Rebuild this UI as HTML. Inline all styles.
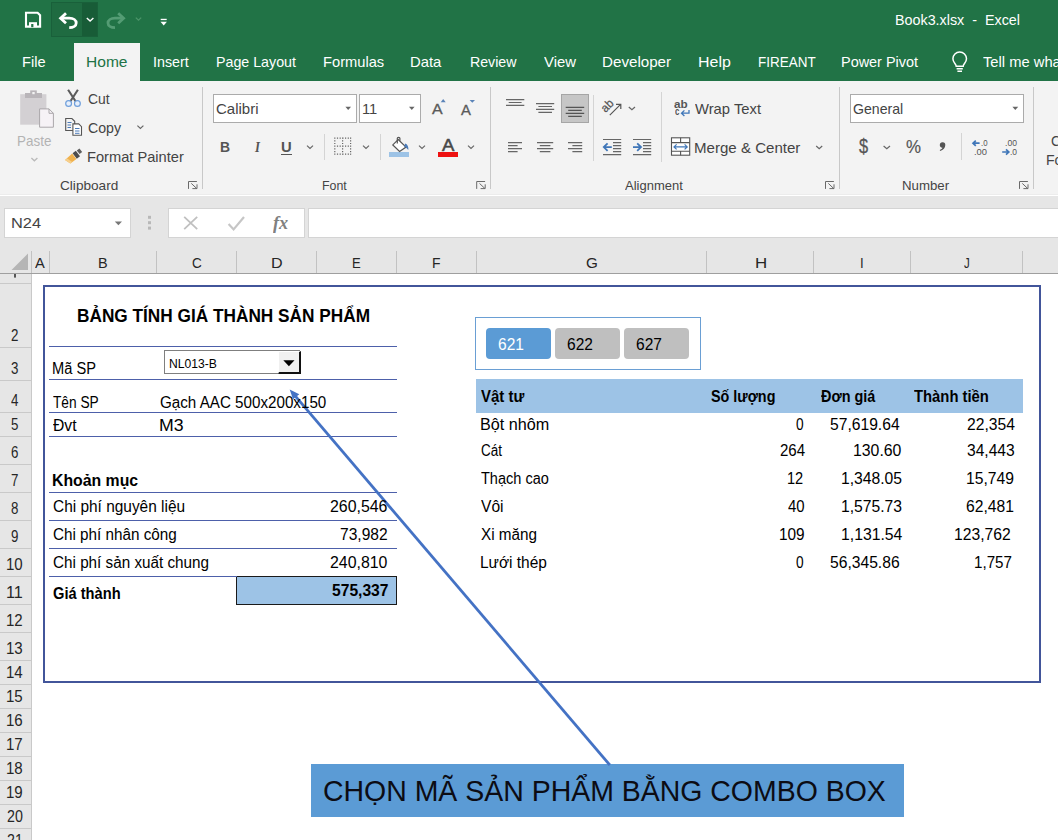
<!DOCTYPE html>
<html lang="en">
<head>
<meta charset="utf-8">
<title>Book3.xlsx - Excel</title>
<style>
*{box-sizing:border-box;margin:0;padding:0}
html,body{width:1058px;height:840px;overflow:hidden;background:#fff}
body{position:relative;font-family:"Liberation Sans",sans-serif;color:#444}
.a{position:absolute}
.t{position:absolute;white-space:pre;transform-origin:0 0;line-height:1}
#titlebar{left:0;top:0;width:1058px;height:81px;background:#217346}
#hometab{left:74px;top:43px;width:66px;height:38px;background:#f3f3f3}
#undobox{left:51px;top:2px;width:47px;height:35px;background:#1f6b41;border:1px solid #19603a}
#undodrop{left:82px;top:3px;width:15px;height:33px;background:#185c37}
#ribbon{left:0;top:81px;width:1058px;height:114px;background:#f3f3f3}
#ribbonline{left:0;top:194px;width:1058px;height:1px;background:#ececec}
#fbar{left:0;top:196px;width:1058px;height:54px;background:#e6e6e6}
.vsep{width:1px;background:#c8c8c8}
.box{background:#fff;border:1px solid #ababab}
.fbox{background:#fff;border:1px solid #d4d4d4}
#colhdr{left:0;top:250px;width:1058px;height:24px;background:#e6e6e6;border-bottom:1px solid #9f9f9f}
#rowhdr{left:0;top:274px;width:32px;height:566px;background:#e6e6e6;border-right:1px solid #c9c9c9}
.cs{top:251px;width:1px;height:22px;background:#c2c2c2}
.rs{left:0;width:31px;height:1px;background:#c9c9c9}
.hl{left:49px;width:348px;height:1px;background:#4d60aa}
</style>
</head>
<body>
<!-- title bar + tab strip -->
<div class="a" id="titlebar"></div>
<div class="a" id="undobox"></div>
<div class="a" id="undodrop"></div>
<div class="a" id="hometab"></div>
<!-- ribbon -->
<div class="a" id="ribbon"></div>
<div class="a" id="ribbonline"></div>
<div class="a" id="fbar"></div>
<!-- ribbon boxes & separators -->
<div class="a vsep" style="left:202px;top:87px;height:102px"></div>
<div class="a vsep" style="left:490px;top:87px;height:102px"></div>
<div class="a vsep" style="left:839px;top:87px;height:102px"></div>
<div class="a vsep" style="left:1033px;top:87px;height:102px"></div>
<div class="a vsep" style="left:324px;top:134px;height:26px;background:#d4d4d4"></div>
<div class="a vsep" style="left:380px;top:134px;height:26px;background:#d4d4d4"></div>
<div class="a vsep" style="left:593px;top:95px;height:66px;background:#d4d4d4"></div>
<div class="a vsep" style="left:661px;top:92px;height:70px;background:#d4d4d4"></div>
<div class="a vsep" style="left:961px;top:133px;height:27px;background:#d4d4d4"></div>
<div class="a box" style="left:213px;top:94px;width:144px;height:29px"></div>
<div class="a box" style="left:359px;top:94px;width:62px;height:29px"></div>
<div class="a box" style="left:850px;top:94px;width:174px;height:29px"></div>
<div class="a" style="left:561px;top:94px;width:28px;height:29px;background:#c6c6c6;border:1px solid #a6a6a6"></div>
<div class="a" style="left:389px;top:152px;width:20px;height:5px;background:#9dc3e6"></div>
<div class="a" style="left:438px;top:152px;width:20px;height:5px;background:#ee1111"></div>
<div class="a" style="left:281px;top:154px;width:11px;height:1px;background:#555"></div>

<!-- formula bar -->
<div class="a fbox" style="left:4px;top:208px;width:127px;height:30px"></div>
<div class="a fbox" style="left:168px;top:208px;width:137px;height:30px"></div>
<div class="a fbox" style="left:308px;top:208px;width:760px;height:30px"></div>
<!-- headers -->
<div class="a" id="colhdr"></div>
<div class="a" id="rowhdr"></div>
<div class="a cs" style="left:31px"></div>
<div class="a cs" style="left:49px"></div>
<div class="a cs" style="left:156px"></div>
<div class="a cs" style="left:236px"></div>
<div class="a cs" style="left:316px"></div>
<div class="a cs" style="left:396px"></div>
<div class="a cs" style="left:476px"></div>
<div class="a cs" style="left:706px"></div>
<div class="a cs" style="left:813px"></div>
<div class="a cs" style="left:910px"></div>
<div class="a cs" style="left:1022px"></div>
<div class="a rs" style="top:283px"></div>
<div class="a rs" style="top:347px"></div>
<div class="a rs" style="top:380px"></div>
<div class="a rs" style="top:412px"></div>
<div class="a rs" style="top:436px"></div>
<div class="a rs" style="top:464px"></div>
<div class="a rs" style="top:492px"></div>
<div class="a rs" style="top:520px"></div>
<div class="a rs" style="top:548px"></div>
<div class="a rs" style="top:576px"></div>
<div class="a rs" style="top:604px"></div>
<div class="a rs" style="top:632px"></div>
<div class="a rs" style="top:660px"></div>
<div class="a rs" style="top:684px"></div>
<div class="a rs" style="top:708px"></div>
<div class="a rs" style="top:732px"></div>
<div class="a rs" style="top:756px"></div>
<div class="a rs" style="top:780px"></div>
<div class="a rs" style="top:804px"></div>
<div class="a rs" style="top:828px"></div>
<!-- sheet content -->
<div class="a" style="left:43px;top:285px;width:998px;height:398px;border:2px solid #42559a"></div>
<div class="a hl" style="top:346px"></div>
<div class="a hl" style="top:379px"></div>
<div class="a hl" style="top:412px"></div>
<div class="a hl" style="top:436px"></div>
<div class="a hl" style="top:492px"></div>
<div class="a hl" style="top:520px"></div>
<div class="a hl" style="top:548px"></div>
<div class="a" style="left:236px;top:576px;width:161px;height:29px;background:#9dc3e6;border:1px solid #1a1a1a"></div>
<div class="a hl" style="top:576px;width:188px"></div>
<!-- combo box -->
<div class="a" style="left:164px;top:350px;width:136px;height:24px;background:#fff;border:1px solid #7f7f7f"></div>
<div class="a" style="left:278px;top:351px;width:23px;height:23px;background:#f0f0f0;border-left:1px solid #fff;border-top:1px solid #fff;border-right:2px solid #111;border-bottom:2px solid #111"></div>
<svg class="a" style="left:283px;top:360.4px" width="12" height="7" viewBox="0 0 12 7"><path d="M0.3 0.3h11.2l-5.6 6z" fill="#000"/></svg>
<!-- slicer -->
<div class="a" style="left:475px;top:317px;width:226px;height:53px;background:#fff;border:1px solid #6a9fd4"></div>
<div class="a" style="left:486px;top:328px;width:65px;height:31px;background:#5b9bd5;border-radius:4px"></div>
<div class="a" style="left:555px;top:328px;width:65px;height:31px;background:#bfbfbf;border-radius:4px"></div>
<div class="a" style="left:624px;top:328px;width:65px;height:31px;background:#bfbfbf;border-radius:4px"></div>
<!-- table header band -->
<div class="a" style="left:476px;top:379px;width:547px;height:34px;background:#9dc3e6"></div>
<!-- callout -->
<div class="a" style="left:311px;top:764px;width:593px;height:53px;background:#5b9bd5"></div>
<svg class="a" style="left:0;top:0" width="1058" height="840" viewBox="0 0 1058 840">
<line x1="609.8" y1="765" x2="294.5" y2="395.2" stroke="#4472c4" stroke-width="2.8"/>
<path d="M289.7 389.6 L299.3 394.3 L293.0 399.2 Z" fill="#4472c4"/>
</svg>

<svg class="a" style="left:0;top:0" width="1058" height="840" viewBox="0 0 1058 840" fill="none" stroke-linecap="butt">
<!-- QAT: save -->
<g stroke="#fff" stroke-width="2.1" fill="none">
<path d="M26 12.8h11.6l2.5 2.5v11.3h-14.1z"/>
</g>
<rect x="29" y="22.2" width="8" height="5" fill="#fff"/>
<rect x="31.2" y="24" width="2.2" height="3.2" fill="#217346"/>
<!-- undo -->
<g stroke="#fff" stroke-width="2.8" fill="none" stroke-linejoin="miter">
<path d="M66 13.2l-5.4 5 5.4 5"/>
<path d="M61 18.2h8.2c4.4 0 7 2.2 7 4.8 0 2.7-2.8 4.6-7 4.6"/>
</g>
<path d="M86.8 18l3.3 3 3.3-3" stroke="#fff" stroke-width="1.4"/>
<!-- redo (disabled) -->
<g stroke="#549c74" stroke-width="2.8" fill="none">
<path d="M118.2 13.2l5.4 5-5.4 5"/>
<path d="M123.2 18.2h-8.2c-4.4 0-7 2.2-7 4.8 0 2.7 2.8 4.6 7 4.6"/>
</g>
<path d="M135.8 17.6l2.7 2.6 2.7-2.6" stroke="#4c9469" stroke-width="1.3"/>
<!-- customize QAT -->
<rect x="160.7" y="18.8" width="6" height="1.3" fill="#fff"/>
<path d="M160.5 21.8h6.4l-3.2 3.6z" fill="#fff"/>
<!-- lightbulb -->
<g stroke="#fff" stroke-width="1.5" fill="none">
<path d="M956.2 66.2c0-2.2-3.3-3.6-3.3-7.4a6.8 6.8 0 0 1 13.6 0c0 3.800-3.300 5.200-3.300 7.400z"/>
<path d="M956.600 68.800h6.200M957.400 71.200h4.600"/>
</g>

<!-- ===== Clipboard group ===== -->
<!-- paste (disabled) -->
<rect x="20.200" y="94.200" width="26.200" height="30.500" fill="#d3d0d3"/>
<rect x="25" y="93" width="17" height="5" fill="#b9b5b9"/>
<rect x="30.200" y="90.400" width="6.600" height="4" fill="#b9b5b9"/>
<rect x="32.300" y="92" width="2.400" height="2.200" fill="#f3f3f3"/>
<path d="M39.600 108.900h9.400l4.400 4.400v13.900h-13.800z" fill="#f6f2f6" stroke="#aaa7aa" stroke-width="1"/>
<path d="M49 108.900v4.400h4.400" stroke="#aaa7aa" stroke-width="1"/>
<path d="M31.400 158l3 2.800 3-2.800" stroke="#b9b9b9" stroke-width="1.300"/>
<!-- cut -->
<path d="M68.100 89.800l7.800 12M77.900 89.800l-7.800 12" stroke="#5a5a5a" stroke-width="2.100" stroke-linecap="butt"/>
<circle cx="68.600" cy="103.500" r="2.900" stroke="#6f9fdb" stroke-width="1.200" fill="#e6effb"/>
<circle cx="77.400" cy="103.500" r="2.900" stroke="#6f9fdb" stroke-width="1.200" fill="#e6effb"/>
<!-- copy -->
<g stroke="#555" stroke-width="1.100" fill="#f3f3f3">
<path d="M65.700 118.500h6.200l2.800 2.800v9.200h-9z"/>
<path d="M72.900 123.900h5.800l2.800 2.800v8.500h-8.600z" fill="#fff"/>
</g>
<g stroke="#4a7ab8" stroke-width="1">
<path d="M67.500 122.500h4M67.500 125h3.500M67.500 127.500h3.500M75 128.500h4.500M75 131h4.500M75 133.300h4.500"/>
</g>
<path d="M137.400 125.600l3 2.800 3-2.800" stroke="#666" stroke-width="1.200"/>
<!-- format painter -->
<path d="M79.400 148.400l2.800 3.600-2.600 2-2.800-3.600z" fill="#5f5f5f"/>
<path d="M75.800 150.800l4.200 5.400-3.200 2.500-4.200-5.400z" fill="#4d4d4d"/>
<path d="M72.200 153.600l4.200 5.400-6 4.400-5.400-3.400z" fill="#f0b24e"/>
<path d="M65 160l5.400 3.400 1.800-1.300-5-3.500z" fill="#f6cf8c"/>
<!-- launchers -->
<g stroke="#6a6a6a" stroke-width="1">
<path id="ln" d="M188.500 188.900v-7.400h8.400M191.300 183.400l5.500 5.200M197 184.300v4.300h-4.600"/>
<path d="M188.500 188.900v-7.400h8.400M191.300 183.400l5.500 5.200M197 184.300v4.300h-4.600" transform="translate(288.200 0)"/>
<path d="M188.500 188.900v-7.400h8.400M191.300 183.400l5.500 5.200M197 184.300v4.300h-4.600" transform="translate(637 0)"/>
<path d="M188.500 188.900v-7.400h8.400M191.300 183.400l5.500 5.200M197 184.300v4.300h-4.600" transform="translate(831 0)"/>
</g>

<!-- ===== Font group ===== -->
<path d="M345.400 106.800h5.600l-2.800 3.200z" fill="#666"/>
<path d="M409 106.800h5.600l-2.800 3.200z" fill="#666"/>
<path d="M440.700 102.200h5l-2.500-3.200z" fill="#5b84b8"/>
<path d="M469.600 100h5.400l-2.700 2.700z" fill="#5b84b8"/>
<path d="M307 145.600l3 2.800 3-2.800" stroke="#666" stroke-width="1.200"/>
<path d="M363 145.600l3 2.800 3-2.800" stroke="#666" stroke-width="1.200"/>
<path d="M419 145.600l3 2.800 3-2.800" stroke="#666" stroke-width="1.200"/>
<path d="M468 145.600l3 2.800 3-2.800" stroke="#666" stroke-width="1.200"/>
<!-- borders icon -->
<g stroke="#666" stroke-width="1.200" stroke-dasharray="1.200 1.500">
<path d="M334.200 138.100h17M334.200 146.100h17M334.200 154.100h17M334.800 137.500v17.200M342.600 137.500v17.200M350.600 137.500v17.200"/>
</g>
<!-- fill bucket -->
<g stroke="#555" stroke-width="1.200" fill="#fff">
<path d="M398.200 139.500l7.800 7.600-6.400 4.400-6.800-6.600z"/>
<path d="M397.300 143.500v-5.300c0-1.200 2.600-1.200 2.600 0v2.500" fill="none"/>
</g>
<path d="M405.300 143.400c2.600 1.200 3.400 3.600 3 6.600-1.600-2-2.600-3-4.200-3.600z" fill="#4a7ab8"/>

<!-- ===== Alignment group ===== -->
<g stroke="#666" stroke-width="1.100">
<path d="M506 99.600h18.300M508.700 102.500h12.900M506 105.400h18.300"/>
<path d="M536 103.600h18.200M538.400 106.500h13.600M536 109.400h18.200M538.400 112.400h13.600"/>
<path d="M565.700 107.400h18.500M568.200 110.400h13.600M565.700 113.400h18.500M568.200 116.400h13.600" stroke="#555"/>
<path d="M508 142.600h14M508 145.600h9.600M508 148.600h14M508 151.600h9.600"/>
<path d="M537 142.600h16.200M539.800 145.600h10.600M537 148.600h16.200M539.800 151.600h10.600"/>
<path d="M568 142.600h14.200M572.400 145.600h9.800M568 148.600h14.200M572.400 151.600h9.800"/>
<path d="M603 139.500h18.200M613 142.600h8.200M613 145.600h8.200M613 148.600h8.200M613 151.600h8.200M603 154.600h18.200"/>
<path d="M633 139.500h18.200M643 142.600h8.200M643 145.600h8.200M643 148.600h8.200M643 151.600h8.200M633 154.600h18.200"/>
</g>
<g stroke="#3f76b8" stroke-width="1.800">
<path d="M603.800 147.100h8M607.600 143.400l-3.800 3.700 3.800 3.700"/>
<path d="M633 147.100h8M637.200 143.400l3.800 3.700-3.800 3.700"/>
</g>
<!-- orientation -->
<text x="0" y="0" transform="translate(605.6 112.9) rotate(-45)" font-family="Liberation Sans, sans-serif" font-size="12" fill="#555" stroke="#555" stroke-width="0.25" textLength="12.6" lengthAdjust="spacingAndGlyphs">ab</text>
<path d="M609.8 115.2L620.6 104.4M616 104.300h4.800v4.800" stroke="#555" stroke-width="1.200"/>
<path d="M628.800 107l3.100 2.800 3.100-2.800" stroke="#666" stroke-width="1.200"/>
<!-- wrap text arrow -->
<path d="M689 110v3.200h-7.400M684.400 110.400l-2.900 2.800 2.900 2.800" stroke="#3f76b8" stroke-width="1.300"/>
<!-- merge & center -->
<g stroke="#555" stroke-width="1.100">
<rect x="671.500" y="137.800" width="18.200" height="17.400" fill="#fff"/>
<path d="M671.500 142.600h18.200M671.500 151.200h18.200M680.600 137.800v4.800M680.600 151.200v4"/>
</g>
<path d="M674 146.900h13.200M676.600 144.400l-2.600 2.500 2.600 2.500M684.600 144.400l2.600 2.500-2.600 2.500" stroke="#3f76b8" stroke-width="1.200"/>
<path d="M816.200 146l3 2.800 3-2.800" stroke="#666" stroke-width="1.200"/>

<!-- ===== Number group ===== -->
<path d="M1012.400 106.800h5.800l-2.900 3.200z" fill="#666"/>
<path d="M883.600 146l3.200 2.800 3.200-2.800" stroke="#666" stroke-width="1.200"/>
<path d="M979.600 143.200h-6.600M975.800 140.600l-2.800 2.600 2.800 2.600" stroke="#3f76b8" stroke-width="1.700"/>
<path d="M1002.200 152h6.600M1006 149.400l2.800 2.600-2.800 2.600" stroke="#3f76b8" stroke-width="1.700"/>

<!-- comma style -->
<path d="M945.300 145.100c0 3.100-1.900 5.100-5.100 5.900l-.500-1c1.500-.500 2.500-1.300 2.700-2.300a2.750 2.750 0 1 1 2.900-2.600z" fill="#555"/>
<!-- ===== Formula bar ===== -->
<path d="M114.800 221.600h7.200l-3.600 3.600z" fill="#777"/>
<rect x="148" y="215.800" width="3" height="3" fill="#b8b8b8"/><rect x="148" y="221.200" width="3" height="3" fill="#b8b8b8"/><rect x="148" y="226.600" width="3" height="3" fill="#b8b8b8"/>
<path d="M184.200 216.800l13 12.400M197.200 216.800l-13 12.400" stroke="#c0c0c0" stroke-width="1.800"/>
<path d="M228.600 224l5 5.400 10.400-12.400" stroke="#c6c6c6" stroke-width="2.200"/>
<!-- row 1 sliver -->
<rect x="14.2" y="274" width="1.6" height="3.6" fill="#333"/>
<!-- select all triangle -->
<path d="M28 253.500v16.500h-16.500z" fill="#b5b5b5"/>
</svg>

<span class="t" style="left:894.78px;top:13.00px;font-size:14px;color:#fff;transform:scaleX(1.0228)">Book3.xlsx  -  Excel</span>
<span class="t" style="left:22.42px;top:54.00px;font-size:15px;color:#fff;transform:scaleX(0.9768)">File</span>
<span class="t" style="left:153.35px;top:54.00px;font-size:15px;color:#fff;transform:scaleX(0.9505)">Insert</span>
<span class="t" style="left:216.45px;top:54.00px;font-size:15px;color:#fff;transform:scaleX(0.9491)">Page Layout</span>
<span class="t" style="left:323.42px;top:54.00px;font-size:15px;color:#fff;transform:scaleX(0.9784)">Formulas</span>
<span class="t" style="left:410.31px;top:54.00px;font-size:15px;color:#fff;transform:scaleX(0.9890)">Data</span>
<span class="t" style="left:469.75px;top:54.00px;font-size:15px;color:#fff;transform:scaleX(0.9451)">Review</span>
<span class="t" style="left:543.70px;top:54.00px;font-size:15px;color:#fff;transform:scaleX(0.9902)">View</span>
<span class="t" style="left:602.39px;top:54.00px;font-size:15px;color:#fff;transform:scaleX(1.0107)">Developer</span>
<span class="t" style="left:698.34px;top:54.00px;font-size:15px;color:#fff;transform:scaleX(1.0638)">Help</span>
<span class="t" style="left:757.50px;top:54.00px;font-size:15px;color:#fff;transform:scaleX(0.8983)">FIREANT</span>
<span class="t" style="left:841.04px;top:54.00px;font-size:15px;color:#fff;transform:scaleX(0.9627)">Power Pivot</span>
<span class="t" style="left:85.56px;top:54.00px;font-size:15px;color:#217346;transform:scaleX(1.0369)">Home</span>
<span class="t" style="left:983.30px;top:54.00px;font-size:15px;color:#fff;transform:scaleX(0.9821)">Tell me what</span>
<span class="t" style="left:88.20px;top:92.00px;font-size:14.5px;color:#444;transform:scaleX(0.9579)">Cut</span>
<span class="t" style="left:88.20px;top:121.00px;font-size:14.5px;color:#444;transform:scaleX(0.9766)">Copy</span>
<span class="t" style="left:87.19px;top:150.00px;font-size:14.5px;color:#444;transform:scaleX(1.0097)">Format Painter</span>
<span class="t" style="left:16.57px;top:134.00px;font-size:14.5px;color:#b3b3b3;transform:scaleX(0.9270)">Paste</span>
<span class="t" style="left:60.00px;top:179.00px;font-size:13.5px;color:#444;transform:scaleX(1.0089)">Clipboard</span>
<span class="t" style="left:216.40px;top:102.00px;font-size:14.5px;color:#444;transform:scaleX(1.0349)">Calibri</span>
<span class="t" style="left:361.99px;top:102.00px;font-size:14.5px;color:#444;transform:scaleX(1.0144)">11</span>
<span class="t" style="left:322.38px;top:179.00px;font-size:13.5px;color:#444;transform:scaleX(0.9176)">Font</span>
<span class="t" style="left:220.37px;top:139.00px;font-size:15px;color:#555;transform:scaleX(0.9290);font-weight:bold">B</span>
<span class="t" style="left:255.05px;top:140.00px;font-size:15px;color:#555;transform:scaleX(0.8493);font-weight:bold;font-style:italic;font-family:'Liberation Serif',serif">I</span>
<span class="t" style="left:281.00px;top:140.00px;font-size:14px;color:#555;transform:scaleX(1.0584);font-weight:bold">U</span>
<span class="t" style="left:432.40px;top:102.00px;font-size:14.5px;color:#5a5a5a;transform:scaleX(1.0999);-webkit-text-stroke:0.3px #5a5a5a">A</span>
<span class="t" style="left:461.40px;top:103.00px;font-size:14px;color:#5a5a5a;transform:scaleX(1.0594);-webkit-text-stroke:0.3px #5a5a5a">A</span>
<span class="t" style="left:441.80px;top:137.00px;font-size:16.5px;color:#484848;transform:scaleX(1.1262);-webkit-text-stroke:0.5px #484848">A</span>
<span class="t" style="left:695.20px;top:102.00px;font-size:14.5px;color:#444;transform:scaleX(1.0198)">Wrap Text</span>
<span class="t" style="left:694.16px;top:141.00px;font-size:14.5px;color:#444;transform:scaleX(1.0391)">Merge &amp; Center</span>
<span class="t" style="left:625.00px;top:179.00px;font-size:13.5px;color:#444;transform:scaleX(0.9619)">Alignment</span>
<span class="t" style="left:853.30px;top:102.00px;font-size:14.5px;color:#444;transform:scaleX(0.9733)">General</span>
<span class="t" style="left:859.20px;top:136.00px;font-size:20px;color:#555;transform:scaleX(0.8180);-webkit-text-stroke:0.3px #555">$</span>
<span class="t" style="left:905.60px;top:138.00px;font-size:18.5px;color:#555;transform:scaleX(0.9123);-webkit-text-stroke:0.2px #555">%</span>
<span class="t" style="left:901.62px;top:179.00px;font-size:13.5px;color:#444;transform:scaleX(0.9806)">Number</span>
<span class="t" style="left:1051.00px;top:134.00px;font-size:14.5px;color:#444;transform:scaleX(0.9488)">C</span>
<span class="t" style="left:1045.63px;top:153.00px;font-size:14.5px;color:#444;transform:scaleX(0.9711)">Fo</span>
<span class="t" style="left:674.00px;top:99.00px;font-size:10.5px;color:#555;transform:scaleX(1.1138);font-weight:bold">ab</span>
<span class="t" style="left:674.50px;top:106.00px;font-size:10.5px;color:#555;transform:scaleX(0.7495);font-weight:bold">c</span>
<span class="t" style="left:980.70px;top:138.00px;font-size:9.5px;color:#555;transform:scaleX(0.8231)">.0</span>
<span class="t" style="left:974.20px;top:147.00px;font-size:9.5px;color:#555;transform:scaleX(0.9895)">.00</span>
<span class="t" style="left:1005.30px;top:138.00px;font-size:9.5px;color:#555;transform:scaleX(0.9045)">.00</span>
<span class="t" style="left:1010.20px;top:147.00px;font-size:9.5px;color:#555;transform:scaleX(0.8884)">.0</span>
<span class="t" style="left:10.77px;top:216.00px;font-size:14.5px;color:#444;transform:scaleX(1.1313)">N24</span>
<span class="t" style="left:272.80px;top:214.00px;font-size:18px;color:#808080;transform:scaleX(1.0133);font-weight:bold;font-style:italic;font-family:'Liberation Serif',serif">fx</span>
<span class="t" style="left:35.10px;top:255.00px;font-size:15.5px;color:#262626;transform:scaleX(0.9450)">A</span>
<span class="t" style="left:97.87px;top:255.00px;font-size:15.5px;color:#262626;transform:scaleX(0.9328)">B</span>
<span class="t" style="left:191.70px;top:255.00px;font-size:15.5px;color:#262626;transform:scaleX(0.8720)">C</span>
<span class="t" style="left:271.16px;top:255.00px;font-size:15.5px;color:#262626;transform:scaleX(1.0390)">D</span>
<span class="t" style="left:351.86px;top:255.00px;font-size:15.5px;color:#262626;transform:scaleX(0.8439)">E</span>
<span class="t" style="left:432.00px;top:255.00px;font-size:15.5px;color:#262626;transform:scaleX(0.8999)">F</span>
<span class="t" style="left:586.10px;top:255.00px;font-size:15.5px;color:#262626;transform:scaleX(0.9813)">G</span>
<span class="t" style="left:754.51px;top:255.00px;font-size:15.5px;color:#262626;transform:scaleX(1.0877)">H</span>
<span class="t" style="left:860.10px;top:255.00px;font-size:15.5px;color:#262626;transform:scaleX(0.8474)">I</span>
<span class="t" style="left:963.90px;top:255.00px;font-size:15.5px;color:#262626;transform:scaleX(0.7429)">J</span>
<span class="t" style="left:10.50px;top:328.00px;font-size:16px;color:#262626;transform:scaleX(0.8326)">2</span>
<span class="t" style="left:10.50px;top:361.00px;font-size:16px;color:#262626;transform:scaleX(0.8326)">3</span>
<span class="t" style="left:10.50px;top:393.00px;font-size:16px;color:#262626;transform:scaleX(0.8326)">4</span>
<span class="t" style="left:10.50px;top:417.00px;font-size:16px;color:#262626;transform:scaleX(0.8326)">5</span>
<span class="t" style="left:10.50px;top:445.00px;font-size:16px;color:#262626;transform:scaleX(0.8326)">6</span>
<span class="t" style="left:10.50px;top:473.00px;font-size:16px;color:#262626;transform:scaleX(0.8326)">7</span>
<span class="t" style="left:10.50px;top:501.00px;font-size:16px;color:#262626;transform:scaleX(0.8326)">8</span>
<span class="t" style="left:10.50px;top:529.00px;font-size:16px;color:#262626;transform:scaleX(0.8326)">9</span>
<span class="t" style="left:6.36px;top:557.00px;font-size:16px;color:#262626;transform:scaleX(0.9409)">10</span>
<span class="t" style="left:6.29px;top:585.00px;font-size:16px;color:#262626;transform:scaleX(1.0120)">11</span>
<span class="t" style="left:6.36px;top:613.00px;font-size:16px;color:#262626;transform:scaleX(0.9409)">12</span>
<span class="t" style="left:6.36px;top:641.00px;font-size:16px;color:#262626;transform:scaleX(0.9409)">13</span>
<span class="t" style="left:6.36px;top:665.00px;font-size:16px;color:#262626;transform:scaleX(0.9409)">14</span>
<span class="t" style="left:6.36px;top:689.00px;font-size:16px;color:#262626;transform:scaleX(0.9409)">15</span>
<span class="t" style="left:6.36px;top:713.00px;font-size:16px;color:#262626;transform:scaleX(0.9409)">16</span>
<span class="t" style="left:6.36px;top:737.00px;font-size:16px;color:#262626;transform:scaleX(0.9409)">17</span>
<span class="t" style="left:6.36px;top:761.00px;font-size:16px;color:#262626;transform:scaleX(0.9409)">18</span>
<span class="t" style="left:6.36px;top:785.00px;font-size:16px;color:#262626;transform:scaleX(0.9409)">19</span>
<span class="t" style="left:7.30px;top:809.00px;font-size:16px;color:#262626;transform:scaleX(0.8883)">20</span>
<span class="t" style="left:7.30px;top:833.00px;font-size:16px;color:#262626;transform:scaleX(0.8883)">21</span>
<span class="t" style="left:77.01px;top:308.00px;font-size:17.5px;color:#000;transform:scaleX(0.9851);font-weight:bold">BẢNG TÍNH GIÁ THÀNH SẢN PHẨM</span>
<span class="t" style="left:51.89px;top:361.00px;font-size:16px;color:#000;transform:scaleX(0.9149)">Mã SP</span>
<span class="t" style="left:169.40px;top:358.00px;font-size:12px;color:#000;transform:scaleX(1.0112)">NL013-B</span>
<span class="t" style="left:52.80px;top:395.00px;font-size:16px;color:#000;transform:scaleX(0.8560)">Tên SP</span>
<span class="t" style="left:160.30px;top:395.00px;font-size:16px;color:#000;transform:scaleX(0.9490)">Gạch AAC 500x200x150</span>
<span class="t" style="left:52.80px;top:418.00px;font-size:16px;color:#000;transform:scaleX(0.9815)">Đvt</span>
<span class="t" style="left:159.19px;top:418.00px;font-size:16px;color:#000;transform:scaleX(1.1061)">M3</span>
<span class="t" style="left:51.81px;top:473.00px;font-size:16px;color:#000;transform:scaleX(0.9881);font-weight:bold">Khoản mục</span>
<span class="t" style="left:52.80px;top:499.00px;font-size:16px;color:#000;transform:scaleX(0.9641)">Chi phí nguyên liệu</span>
<span class="t" style="left:330.20px;top:499.00px;font-size:16px;color:#000;transform:scaleX(0.9923)">260,546</span>
<span class="t" style="left:52.80px;top:527.00px;font-size:16px;color:#000;transform:scaleX(0.9529)">Chi phí nhân công</span>
<span class="t" style="left:340.00px;top:527.00px;font-size:16px;color:#000;transform:scaleX(0.9727)">73,982</span>
<span class="t" style="left:52.80px;top:555.00px;font-size:16px;color:#000;transform:scaleX(0.9535)">Chi phí sản xuất chung</span>
<span class="t" style="left:330.20px;top:555.00px;font-size:16px;color:#000;transform:scaleX(0.9923)">240,810</span>
<span class="t" style="left:52.80px;top:586.00px;font-size:16px;color:#000;transform:scaleX(0.9163);font-weight:bold">Giá thành</span>
<span class="t" style="left:331.60px;top:583.00px;font-size:16px;color:#000;transform:scaleX(0.9768);font-weight:bold">575,337</span>
<span class="t" style="left:497.50px;top:337.00px;font-size:16px;color:#fff;transform:scaleX(0.9700)">621</span>
<span class="t" style="left:566.50px;top:337.00px;font-size:16px;color:#000;transform:scaleX(0.9700)">622</span>
<span class="t" style="left:635.50px;top:337.00px;font-size:16px;color:#000;transform:scaleX(0.9700)">627</span>
<span class="t" style="left:480.80px;top:389.00px;font-size:16px;color:#000;transform:scaleX(0.9340);font-weight:bold">Vật tư</span>
<span class="t" style="left:711.00px;top:389.00px;font-size:16px;color:#000;transform:scaleX(0.8963);font-weight:bold">Số lượng</span>
<span class="t" style="left:820.80px;top:389.00px;font-size:16px;color:#000;transform:scaleX(0.9012);font-weight:bold">Đơn giá</span>
<span class="t" style="left:913.70px;top:389.00px;font-size:16px;color:#000;transform:scaleX(0.9261);font-weight:bold">Thành tiền</span>
<span class="t" style="left:479.59px;top:417.00px;font-size:16px;color:#000;transform:scaleX(1.0111)">Bột nhôm</span>
<span class="t" style="left:795.80px;top:417.00px;font-size:16px;color:#000;transform:scaleX(0.8548)">0</span>
<span class="t" style="left:829.70px;top:417.00px;font-size:16px;color:#000;transform:scaleX(0.9777)">57,619.64</span>
<span class="t" style="left:966.60px;top:417.00px;font-size:16px;color:#000;transform:scaleX(0.9788)">22,354</span>
<span class="t" style="left:480.60px;top:443.00px;font-size:16px;color:#000;transform:scaleX(0.8405)">Cát</span>
<span class="t" style="left:779.80px;top:443.00px;font-size:16px;color:#000;transform:scaleX(0.9401)">264</span>
<span class="t" style="left:853.01px;top:443.00px;font-size:16px;color:#000;transform:scaleX(0.9888)">130.60</span>
<span class="t" style="left:966.60px;top:443.00px;font-size:16px;color:#000;transform:scaleX(0.9747)">34,443</span>
<span class="t" style="left:480.60px;top:471.00px;font-size:16px;color:#000;transform:scaleX(0.9075)">Thạch cao</span>
<span class="t" style="left:787.39px;top:471.00px;font-size:16px;color:#000;transform:scaleX(0.9113)">12</span>
<span class="t" style="left:840.82px;top:471.00px;font-size:16px;color:#000;transform:scaleX(0.9791)">1,348.05</span>
<span class="t" style="left:966.22px;top:471.00px;font-size:16px;color:#000;transform:scaleX(0.9805)">15,749</span>
<span class="t" style="left:480.60px;top:499.00px;font-size:16px;color:#000;transform:scaleX(0.9747)">Vôi</span>
<span class="t" style="left:787.90px;top:499.00px;font-size:16px;color:#000;transform:scaleX(0.9330)">40</span>
<span class="t" style="left:840.82px;top:499.00px;font-size:16px;color:#000;transform:scaleX(0.9791)">1,575.73</span>
<span class="t" style="left:966.30px;top:499.00px;font-size:16px;color:#000;transform:scaleX(0.9788)">62,481</span>
<span class="t" style="left:480.60px;top:527.00px;font-size:16px;color:#000;transform:scaleX(0.9549)">Xi măng</span>
<span class="t" style="left:779.24px;top:527.00px;font-size:16px;color:#000;transform:scaleX(0.9611)">109</span>
<span class="t" style="left:840.82px;top:527.00px;font-size:16px;color:#000;transform:scaleX(0.9840)">1,131.54</span>
<span class="t" style="left:954.02px;top:527.00px;font-size:16px;color:#000;transform:scaleX(0.9799)">123,762</span>
<span class="t" style="left:479.63px;top:555.00px;font-size:16px;color:#000;transform:scaleX(0.9656)">Lưới thép</span>
<span class="t" style="left:795.80px;top:555.00px;font-size:16px;color:#000;transform:scaleX(0.8548)">0</span>
<span class="t" style="left:829.70px;top:555.00px;font-size:16px;color:#000;transform:scaleX(0.9777)">56,345.86</span>
<span class="t" style="left:974.35px;top:555.00px;font-size:16px;color:#000;transform:scaleX(0.9477)">1,757</span>
<span class="t" style="left:322.94px;top:776.00px;font-size:29.5px;color:#0c0c14;transform:scaleX(0.9644)">CHỌN MÃ SẢN PHẨM BẰNG COMBO BOX</span>
</body>
</html>
